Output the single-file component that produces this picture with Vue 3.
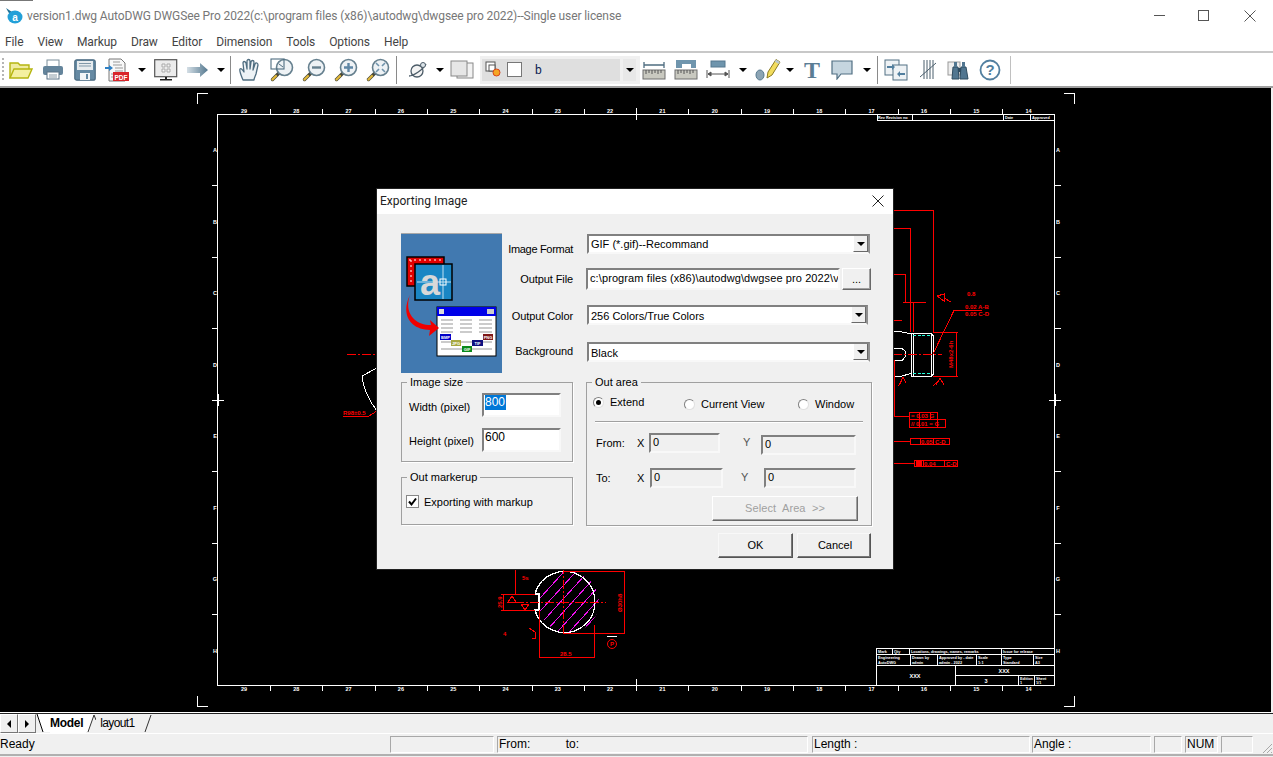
<template>
  <div class="app">
    <!-- shared toolbar symbols -->
    <svg class="defs" width="0" height="0">
      <defs>
        <symbol id="mag" viewBox="0 0 24 24">
          <path d="M9 15 L2.5 21.5" stroke="#4a4a3a" stroke-width="3.4" stroke-linecap="round" />
          <path d="M6 18 L2.5 21.5" stroke="#e3b93a" stroke-width="2.2" stroke-linecap="round" />
          <circle cx="14.5" cy="9.5" r="8" fill="#eef2f5" stroke="#66808f" stroke-width="1.6" />
        </symbol>
        <symbol id="ruler" viewBox="0 0 24 12">
          <rect x="1" y="1" width="22" height="9" fill="#c9c9c0" stroke="#6e6e6e" />
          <path d="M4 1v4M7 1v3M10 1v4M13 1v3M16 1v4M19 1v3" stroke="#555" fill="none" />
        </symbol>
      </defs>
    </svg>

    <header class="titlebar">
      <svg class="app-icon" width="18" height="18" viewBox="0 0 18 18">
        <path d="M1 1 L7 5 L5 8 Z" fill="#1f6f93" />
        <ellipse cx="10" cy="10" rx="7.5" ry="6.5" fill="#23a0d8" />
        <text x="10" y="14" text-anchor="middle" class="app-icon-a">a</text>
      </svg>
      <span class="title-text">version1.dwg AutoDWG DWGSee Pro 2022(c:\program files (x86)\autodwg\dwgsee pro 2022)--Single user license</span>
      <div class="win-btns">
        <svg class="win-min" width="12" height="12" viewBox="0 0 12 12"><path d="M0 5.5H11" stroke="#555" /></svg>
        <svg width="12" height="12" viewBox="0 0 12 12"><rect x=".5" y=".5" width="10" height="10" fill="none" stroke="#555" /></svg>
        <svg width="12" height="12" viewBox="0 0 12 12"><path d="M.5 .5L11.5 11.5M11.5 .5L.5 11.5" stroke="#555" /></svg>
      </div>
    </header>

    <nav class="menubar">
      <span v-for="m in menus" :key="m" class="menu-item">{{ m }}</span>
    </nav>

    <div class="toolbar">
      <span class="grip"></span>
      <button class="tb">
        <svg width="24" height="20" viewBox="0 0 24 20">
          <path d="M1 18V3h8l2 2h9v4" fill="#efeba0" stroke="#b5b510" stroke-width="1.4" />
          <path d="M1 18L5 9H23L19 18Z" fill="#f4f0a0" stroke="#b5b510" stroke-width="1.4" />
        </svg>
      </button>
      <button class="tb">
        <svg width="22" height="22" viewBox="0 0 22 22">
          <rect x="5" y="1" width="12" height="7" fill="#fff" stroke="#7b8d99" />
          <rect x="1" y="7" width="20" height="9" rx="2" fill="#64849b" />
          <rect x="5" y="13" width="12" height="7" fill="#fff" stroke="#5b7286" />
          <path d="M7 16h8M7 18h8" stroke="#8a9aa6" />
        </svg>
      </button>
      <button class="tb">
        <svg width="22" height="22" viewBox="0 0 22 22">
          <rect x=".8" y=".8" width="20.4" height="20.4" rx="2" fill="#668aa3" stroke="#4a6a80" stroke-width="1.2" />
          <rect x="3" y="2" width="16" height="9" fill="#e6ebee" />
          <path d="M5 4.5h12M5 7h12" stroke="#7f97a8" />
          <rect x="6" y="14" width="10" height="7" fill="#f4f6f7" />
          <rect x="12" y="15" width="2" height="5" fill="#668aa3" />
        </svg>
      </button>
      <button class="tb">
        <svg width="24" height="24" viewBox="0 0 24 24">
          <path d="M4 1h12l4 4v18H4Z" fill="#f8f8f8" stroke="#777" />
          <path d="M8 4h7M8 7h9M10 10h8M10 13h8M6 16h8M6 19h6" stroke="#999" />
          <path d="M0 9h4V7l4 3-4 3v-2H0Z" fill="#2f80c4" />
          <rect x="8" y="14" width="16" height="9" fill="#d9252a" />
          <text x="16" y="21.5" text-anchor="middle" class="pdf-text">PDF</text>
        </svg>
      </button>
      <span class="drop w17"></span>
      <button class="tb">
        <svg width="24" height="22" viewBox="0 0 24 22">
          <rect x=".7" y=".7" width="22" height="17" fill="#ececec" stroke="#555" stroke-width="1.2" />
          <path d="M8 5h3v3H8zM13 5h3v3h-3zM8 10h3v3H8zM13 10h3v3h-3z" fill="#f4f4f4" stroke="#aaa" />
          <path d="M11 18h2v2h-2zM6 20h12v1.5H6z" fill="#222" />
        </svg>
      </button>
      <button class="tb">
        <svg width="22" height="16" viewBox="0 0 22 16">
          <defs>
            <linearGradient id="arrowFill">
              <stop offset="0" stop-color="#d5dfe6" />
              <stop offset="1" stop-color="#54788f" />
            </linearGradient>
          </defs>
          <path d="M0 5H13V1L21 8L13 15V11H0Z" fill="url(#arrowFill)" />
        </svg>
      </button>
      <span class="drop w14"></span>
      <span class="sep"></span>
      <button class="tb">
        <svg width="24" height="24" viewBox="0 0 24 24">
          <path d="M5 22C3 17 1 13 2 11c1-1 2 0 4 3L5 5c0-2 2-2 3 0l1 6V3c0-2 3-2 3 0v8l1-7c0-2 3-2 3 0l-1 8 2-6c1-2 3-1 3 1l-2 9c-1 3-2 4-2 6Z" fill="#eef3f6" stroke="#4f6d80" stroke-width="1.3" stroke-linejoin="round" />
        </svg>
      </button>
      <button class="tb">
        <svg width="24" height="24" viewBox="0 0 24 24">
          <use href="#mag" />
          <rect x="1" y="1" width="13" height="10" fill="none" stroke="#4f6d80" stroke-width="1.1" />
          <path d="M9 6L13 9" stroke="#4f6d80" />
        </svg>
      </button>
      <button class="tb">
        <svg width="24" height="24" viewBox="0 0 24 24">
          <use href="#mag" />
          <path d="M10 9.5H19" stroke="#66808f" stroke-width="2.4" />
        </svg>
      </button>
      <button class="tb">
        <svg width="24" height="24" viewBox="0 0 24 24">
          <use href="#mag" />
          <path d="M10 9.5H19M14.5 5V14" stroke="#5f87a5" stroke-width="2.4" />
        </svg>
      </button>
      <button class="tb">
        <svg width="24" height="24" viewBox="0 0 24 24">
          <use href="#mag" />
          <path d="M13 8L10 5M16 8L19 5M13 11L10 14M16 11L19 14" stroke="#6f93ab" stroke-width="1.6" />
        </svg>
      </button>
      <span class="sep"></span>
      <button class="tb gap-l">
        <svg width="20" height="18" viewBox="0 0 20 18">
          <ellipse cx="9" cy="10" rx="6" ry="6" fill="#f4f4f4" stroke="#4c5c68" stroke-width="1.3" />
          <path d="M1 15C5 15 15 9 18 3" fill="none" stroke="#4c5c68" stroke-width="1.3" />
          <circle cx="15" cy="4" r="2.5" fill="#dce4e9" stroke="#4c5c68" />
        </svg>
      </button>
      <span class="drop w12"></span>
      <button class="tb">
        <svg width="24" height="20" viewBox="0 0 24 20">
          <rect x="7" y="3" width="16" height="15" fill="#f2f2f2" stroke="#888" />
          <rect x="1" y="1" width="16" height="15" fill="#e6e6e6" stroke="#888" />
        </svg>
      </button>
      <div class="layer-combo">
        <div class="layer-field">
          <svg width="17" height="17" viewBox="0 0 17 17">
            <rect x="1" y="1" width="9" height="9" fill="#fff" stroke="#555" />
            <rect x="4" y="4" width="6" height="6" fill="#fff" stroke="#555" />
            <circle cx="11.5" cy="11.5" r="3.5" fill="#f5a623" stroke="#d8431c" />
          </svg>
          <span class="layer-check"></span>
          <span class="layer-name">b</span>
        </div>
        <span class="layer-drop"><span class="drop-tri"></span></span>
      </div>
      <button class="tb">
        <svg width="24" height="22" viewBox="0 0 24 22">
          <path d="M2 6H22M2 3V9M22 3V9" stroke="#4f6d80" stroke-width="1.3" fill="none" />
          <use href="#ruler" y="10" width="24" height="12" />
        </svg>
      </button>
      <button class="tb">
        <svg width="24" height="22" viewBox="0 0 24 22">
          <path d="M2 1H22V9H17V5H8V9H2Z" fill="#6f95ad" />
          <use href="#ruler" y="10" width="24" height="12" />
        </svg>
      </button>
      <button class="tb">
        <svg width="24" height="20" viewBox="0 0 24 20">
          <rect x="5" y="1" width="14" height="6" fill="#6f95ad" stroke="#56798f" />
          <path d="M1 10V18M23 10V18M2 14H22M2 14l3-2v4zM22 14l-3-2v4z" stroke="#555" fill="#555" />
        </svg>
      </button>
      <span class="drop w18"></span>
      <button class="tb w31">
        <svg width="26" height="24" viewBox="0 0 26 24">
          <path d="M12 20L13 14L21 1.5L25 4L17 17Z" fill="#f2dc5d" stroke="#8a7a22" />
          <path d="M21 1.5L25 4L23.5 6L19.8 3.5Z" fill="#b8c6cf" />
          <ellipse cx="5" cy="17" rx="4" ry="5" fill="#8ca4b4" stroke="#56798f" />
        </svg>
      </button>
      <span class="drop w14"></span>
      <button class="tb w30">
        <span class="t-glyph">T</span>
      </button>
      <button class="tb w30">
        <svg width="22" height="20" viewBox="0 0 22 20">
          <path d="M1 1H21V14H10L6 19V14H1Z" fill="#c5d5df" stroke="#527084" stroke-width="1.2" />
        </svg>
      </button>
      <span class="drop w20"></span>
      <span class="sep flush"></span>
      <button class="tb w30">
        <svg width="24" height="22" viewBox="0 0 24 22">
          <rect x="1" y="1" width="14" height="15" fill="#eef2f5" stroke="#527084" />
          <rect x="9" y="6" width="14" height="15" fill="#eef2f5" stroke="#527084" />
          <path d="M3 7h5V5l3 3-3 3V9H3ZM21 14h-5v-2l-3 3 3 3v-2h5Z" fill="#527f9f" />
        </svg>
      </button>
      <button class="tb gap-l w30">
        <svg width="18" height="22" viewBox="0 0 18 22">
          <path d="M5 1V20M8 1V20M11 1V20M14 1V20M1 18L17 4" stroke="#4a5e6c" fill="none" />
        </svg>
      </button>
      <button class="tb w31">
        <svg width="24" height="20" viewBox="0 0 24 20">
          <rect x="1" y="2" width="12" height="13" fill="#eee" stroke="#999" />
          <path d="M6 7h5l1 12H5ZM14 7h5l2 12h-8Z" fill="#517690" stroke="#2f4c60" />
          <rect x="7" y="2" width="3" height="5" fill="#517690" />
          <rect x="15" y="2" width="3" height="5" fill="#517690" />
          <rect x="11" y="8" width="3" height="4" fill="#2f4c60" />
        </svg>
      </button>
      <button class="tb w31">
        <svg width="22" height="22" viewBox="0 0 22 22">
          <circle cx="11" cy="11" r="9.5" fill="#fff" stroke="#527f9f" stroke-width="1.8" />
          <text x="11" y="16" text-anchor="middle" class="help-glyph">?</text>
        </svg>
      </button>
      <span class="sep last"></span>
    </div>

    <main class="canvas">
      <svg class="drawing" width="1273" height="624" viewBox="0 88 1273 624">
        <!-- sheet frame -->
        <g fill="none" stroke="#fff">
          <path d="M197.5 104V93.5H208M1064 93.5H1074.5V104M197.5 696V706.5H208M1064 706.5H1074.5V696" />
          <rect x="217.5" y="114.5" width="837" height="571" />
          <path v-for="x in tickX" :key="x" :d="`M${x} 114V109M${x} 685V691`" />
          <path v-for="y in tickY" :key="y" :d="`M218 ${y}H212M1055 ${y}H1061`" />
          <path d="M636 108V120M630 114H642M636 679V691M630 685H642M212 400H224M218 394V406M1049 400H1061M1055 394V406" />
          <!-- title block -->
          <path d="M876 648H1054M876 654H1054M876 665H1054M955 675H1054M876 648V685M892 648V654M909 648V654M1001 648V665M910 654V665M937 654V665M976 654V665M1033 654V665M955 665V685M1018 675V685M1034 675V685" />
          <path d="M877 114V120H1055M912 114V120M1003 114V120M1030 114V120" />
        </g>
        <g class="tiny" fill="#fff">
          <text v-for="n in labelX" :key="n.x" :x="n.x" y="113" text-anchor="middle">{{ n.t }}</text>
          <text v-for="n in labelX" :key="'b' + n.x" :x="n.x" y="691" text-anchor="middle">{{ n.t }}</text>
          <text v-for="n in labelY" :key="n.y" x="215" :y="n.y" text-anchor="middle">{{ n.t }}</text>
          <text v-for="n in labelY" :key="'r' + n.y" x="1058" :y="n.y" text-anchor="middle">{{ n.t }}</text>
        </g>
        <g class="micro" fill="#fff">
          <text x="878" y="119">Rev Revision no</text>
          <text x="1005" y="119">Date</text>
          <text x="1032" y="119">Approved</text>
          <text x="878" y="653">Mark</text>
          <text x="894" y="653">Qty</text>
          <text x="911" y="653">Locations, drawings, names, remarks</text>
          <text x="1003" y="653">Issue for release</text>
          <text x="878" y="659">Engineering</text>
          <text x="878" y="664">AutoDWG</text>
          <text x="912" y="659">Drawn by</text>
          <text x="912" y="664">admin</text>
          <text x="939" y="659">Approved by - date</text>
          <text x="939" y="664">admin - 2022</text>
          <text x="978" y="659">Scale</text>
          <text x="978" y="664">1:1</text>
          <text x="1003" y="659">Type</text>
          <text x="1003" y="664">Standard</text>
          <text x="1035" y="659">Size</text>
          <text x="1035" y="664">A3</text>
          <text x="1020" y="680">Edition</text>
          <text x="1020" y="684">1</text>
          <text x="1036" y="680">Sheet</text>
          <text x="1036" y="684">1/1</text>
        </g>
        <g class="tiny" fill="#fff">
          <text x="915" y="678" text-anchor="middle">XXX</text>
          <text x="1004" y="673" text-anchor="middle">XXX</text>
          <text x="986" y="683" text-anchor="middle">3</text>
        </g>

        <!-- part, right of the dialog -->
        <g fill="none" stroke="#fff">
          <path d="M893 331.5H900L911 334M893 376.5H900L911 373.5" />
          <path d="M893 348.5H902L905 351V357L902 360.5H893" />
          <path d="M911.5 333.5H931L933.5 336V374L931 376.5H911.5ZM913.5 333.5V376.5M931.5 333.5V376.5" />
        </g>
        <path d="M913 335.5H931M913 373.5H931" stroke="#2fd" stroke-dasharray="3 1.5" fill="none" />
        <g fill="none" stroke="#f00">
          <path d="M893 210.5H933.5V332M893 228.5H910.5V332M893 274.5H905.5V302M903 302.5H926M913.5 302V332M893 320.5H902" />
          <path d="M933 332.5H958M933 376.5H958M956.5 332V376" />
          <path d="M893 354.5H942" stroke-dasharray="9 2 2 2" />
          <path d="M933 354L954 310.5H982" />
          <path d="M894.5 360V416H910M893 441.5H910M893 463.5H914" />
          <path d="M909.5 412.5H937.5V419.5H909.5ZM909.5 419.5H945V427.5H909.5ZM919.5 412V427M930.5 412V419M937.5 419V427" />
          <path d="M910.5 438.5H949.5V444.5H910.5ZM920.5 438V444M933.5 438V444" />
          <path d="M914.5 460.5H957.5V466.5H914.5ZM923.5 460V466M944.5 460V466" />
          <path d="M937 296L944 294V301ZM944 298L951 302M900 383L903 377L906 383M898 386L902 381M936 385L940 378L944 385M933 386L937 382" />
        </g>
        <g class="micro-red" fill="#f00">
          <text x="967" y="296">0.8</text>
          <text x="965" y="309">0.02 A-B</text>
          <text x="965" y="316">0.05 C-D</text>
          <text transform="translate(953 368) rotate(-90)">M48x2-6h</text>
          <text x="911" y="418">= 0.03 G</text>
          <text x="911" y="426">// 0.01 = G</text>
          <text x="921" y="444">0.05</text>
          <text x="935" y="444">C-D</text>
          <text x="924" y="466">0.04</text>
          <text x="946" y="466">C-D</text>
        </g>
        <rect x="916" y="461" width="6" height="5" fill="#f00" />

        <!-- section, below the dialog -->
        <defs>
          <clipPath id="shaftClip">
            <path d="M539 594A30.5 30.5 0 1 1 539 610Z" />
          </clipPath>
        </defs>
        <g clip-path="url(#shaftClip)" stroke="#f010f0" fill="none">
          <path v-for="h in hatch" :key="h" :d="`M${h} 640L${h + 68} 565`" />
        </g>
        <path d="M539 594H535A30.5 30.5 0 1 1 535 610H539Z" fill="none" stroke="#fff" stroke-width="1.2" />
        <g fill="none" stroke="#f00">
          <path d="M563 571.5H624.5V633.5H563M539.5 610V657.5H594.5V625M501 594.5H535M501 610.5H535M503.5 594V610M515.5 570V594" />
          <path d="M515 602.5H606M563.5 565V636" stroke-dasharray="9 2 2 2" />
          <path d="M508 602L512 596L516 602ZM521 604H529L525 610Z" />
          <path d="M529 628L535 632V638L532 638" />
          <circle class="round" cx="612" cy="644" r="4.5" />
        </g>
        <path d="M607 636.5H617" stroke="#fff" />
        <g class="micro-red" fill="#f00">
          <text x="522" y="580">5s</text>
          <text x="503" y="636">4</text>
          <text x="610" y="646">P</text>
          <text x="560" y="656">28.5</text>
          <text transform="translate(622 612) rotate(-90)">&#216;30h8</text>
          <text transform="translate(502 608) rotate(-90)">25.9</text>
        </g>

        <!-- left of the dialog -->
        <path d="M347 354.5H377" stroke="#f00" stroke-dasharray="9 2 2 2" />
        <path d="M377 368L362 376C363 388 370 402 377 411" stroke="#fff" fill="none" />
        <path d="M343 416.5H368L377 411" stroke="#f00" fill="none" />
        <text x="343" y="415" class="micro-red" fill="#f00">R98&#177;0.5</text>
      </svg>
    </main>

    <section class="dlg">
      <div class="dlg-title">
        <span>Exporting Image</span>
        <svg width="12" height="12" viewBox="0 0 12 12"><path d="M.5 .5L11.5 11.5M11.5 .5L.5 11.5" stroke="#222" /></svg>
      </div>
      <div class="dlg-body">
        <div class="dlg-top">
          <svg class="export-art" width="101" height="140" viewBox="0 0 101 140">
            <rect width="101" height="140" fill="#4179b0" />
            <rect x="0" y="0" width="101" height="1" fill="#a8a8a8" />
            <rect x="6" y="24" width="37" height="29" fill="#e00000" stroke="#000" stroke-width="1.5" />
            <path d="M8 27H40M10 27V52" stroke="#fff" stroke-dasharray="2 3" fill="none" />
            <rect x="14" y="31" width="37" height="36" fill="#1a86c4" stroke="#000" stroke-width="1.5" />
            <path d="M16 49H50M42 32V66" stroke="#bfe0f2" fill="none" />
            <text x="29" y="62" text-anchor="middle" class="art-a">a</text>
            <rect x="39" y="46" width="6" height="6" fill="none" stroke="#fff" />
            <rect x="36" y="74" width="59" height="49" fill="#fff" stroke="#000" stroke-width="1" />
            <rect x="36" y="74" width="59" height="9" fill="#0000e8" />
            <rect x="38" y="76" width="5" height="5" fill="#ddd" />
            <rect x="86" y="76" width="7" height="5" fill="#ccc" />
            <path d="M40 87H52M59 87H71M78 87H91M40 91H52M59 91H71M78 91H91M40 95H52M59 95H71M78 95H91M40 99H52M59 99H71M78 99H91M40 109H91M40 116H91" stroke="#bbb" stroke-width="1.5" fill="none" />
            <path d="M9 62C3 78 12 92 30 92L29 87L38 95L28 103L29 97C10 97 -1 82 9 62Z" fill="#f00000" />
            <g class="art-tag">
              <rect x="39" y="101" width="11" height="6" fill="#0000c8" />
              <text x="44.5" y="106" text-anchor="middle">BMP</text>
              <rect x="50" y="107" width="10" height="6" fill="#a8a840" />
              <text x="55" y="112" text-anchor="middle">JPG</text>
              <rect x="61" y="113" width="10" height="6" fill="#0a8a1a" />
              <text x="66" y="118" text-anchor="middle">GIF</text>
              <rect x="71" y="107" width="11" height="6" fill="#101080" />
              <text x="76.5" y="112" text-anchor="middle">TIF</text>
              <rect x="82" y="101" width="10" height="6" fill="#801818" />
              <text x="87" y="106" text-anchor="middle">PNG</text>
            </g>
          </svg>
          <div class="format-col">
            <div class="row r1">
              <label>Image Format</label>
              <div class="combo c283"><span>GIF (*.gif)--Recommand</span><i class="combo-btn"><span class="drop-tri"></span></i></div>
            </div>
            <div class="row r2">
              <label>Output File</label>
              <div class="inset path-field">c:\program files (x86)\autodwg\dwgsee pro 2022\v</div>
              <button class="btn browse">...</button>
            </div>
            <div class="row r3">
              <label>Output Color</label>
              <div class="combo c281"><span>256 Colors/True Colors</span><i class="combo-btn"><span class="drop-tri"></span></i></div>
            </div>
            <div class="row r4">
              <label>Background</label>
              <div class="combo c283"><span>Black</span><i class="combo-btn"><span class="drop-tri"></span></i></div>
            </div>
          </div>
        </div>

        <div class="dlg-lower">
          <div class="left-col">
            <fieldset class="group size-group">
              <legend>Image size</legend>
              <div class="size-row">
                <label>Width (pixel)</label>
                <div class="inset size-input"><span class="selected">800</span></div>
              </div>
              <div class="size-row second">
                <label>Height (pixel)</label>
                <div class="inset size-input">600</div>
              </div>
            </fieldset>
            <fieldset class="group markup-group">
              <legend>Out markerup</legend>
              <div class="check-row">
                <svg class="check" width="13" height="13" viewBox="0 0 13 13">
                  <rect x=".5" y=".5" width="12" height="12" fill="#fff" stroke="#888" />
                  <path d="M3 6.5L5.5 9.5L10 3.5" fill="none" stroke="#000" stroke-width="2" />
                </svg>
                <span>Exporting with markup</span>
              </div>
            </fieldset>
          </div>

          <fieldset class="group area-group">
            <legend>Out area</legend>
            <div class="radio-row">
              <div class="radio-item w91 up"><span class="radio on"></span>Extend</div>
              <div class="radio-item w114"><span class="radio"></span>Current View</div>
              <div class="radio-item"><span class="radio"></span>Window</div>
            </div>
            <div class="area-sep"></div>
            <div class="coord-row from">
              <span class="c-name">From:</span>
              <span class="c-x">X</span>
              <div class="inset field w71">0</div>
              <span class="c-y up2">Y</span>
              <div class="inset field w95 down2">0</div>
            </div>
            <div class="coord-row to">
              <span class="c-name">To:</span>
              <span class="c-x wide">X</span>
              <div class="inset field w73">0</div>
              <span class="c-y near up2">Y</span>
              <div class="inset field w92">0</div>
            </div>
            <button class="btn select-area">Select&nbsp; Area &nbsp;&gt;&gt;</button>
          </fieldset>
        </div>

        <div class="dlg-actions">
          <button class="btn action">OK</button>
          <button class="btn action cancel">Cancel</button>
        </div>
      </div>
    </section>

    <div class="tabbar">
      <button class="tab-nav"><span class="nav-l"></span></button>
      <button class="tab-nav"><span class="nav-r"></span></button>
      <svg class="slant" width="14" height="18" viewBox="0 0 14 18">
        <path d="M0 0L7 18H14V0Z" fill="#fff" />
        <path d="M1 0L7 18" stroke="#000" />
      </svg>
      <span class="tab active">Model</span>
      <svg class="slant" width="10" height="18" viewBox="0 0 10 18">
        <path d="M0 0H8L3 18H0Z" fill="#fff" />
        <path d="M8 1L2 18M8 1L10 6" stroke="#333" fill="none" />
      </svg>
      <span class="tab">layout1</span>
      <svg class="slant" width="10" height="18" viewBox="0 0 10 18">
        <path d="M8 1L2 18" stroke="#333" />
      </svg>
    </div>

    <footer class="statusbar">
      <span class="ready">Ready</span>
      <span class="cell s1"></span>
      <span class="cell s2">From: <i class="to-label">to:</i></span>
      <span class="cell s3">Length :</span>
      <span class="cell s4">Angle :</span>
      <span class="cell s5"></span>
      <span class="cell s6">NUM</span>
      <span class="cell s7"></span>
      <svg class="resize-grip" width="12" height="12" viewBox="0 0 12 12">
        <path d="M11 2L2 11M11 6L6 11M11 10L10 11" stroke="#a8a8a8" />
      </svg>
    </footer>
  </div>
</template>

<script setup>
const menus = ['File', 'View', 'Markup', 'Draw', 'Editor', 'Dimension', 'Tools', 'Options', 'Help']

const tickX = Array.from({ length: 15 }, (_, i) => 270.5 + Math.round(i * 52.3))
const tickY = Array.from({ length: 7 }, (_, i) => 185.5 + Math.round(i * 71.5))
const labelX = Array.from({ length: 16 }, (_, i) => ({ x: 244 + i * 52.3, t: 29 - i }))
const labelY = 'ABCDEFGH'.split('').map((t, i) => ({ t, y: 152 + i * 71.5 }))
const hatch = Array.from({ length: 12 }, (_, i) => 478 + i * 12)
</script>

<style>
html, body {
  margin: 0;
  background: #f0f0f0;
}
</style>

<style scoped>
.app {
  position: relative;
  display: flex;
  flex-direction: column;
  width: 1273px;
  height: 757px;
  overflow: hidden;
  background: #f0f0f0;
  font-family: "Liberation Sans", Arial, sans-serif;
  font-size: 11px;
  color: #000;
}

.defs {
  position: absolute;
}

button {
  font-family: inherit;
  font-size: inherit;
}

/* title + menu */
.titlebar {
  display: flex;
  align-items: center;
  height: 31px;
  padding-left: 5px;
  background: linear-gradient(90deg, #777 0, #777 33px, #fff 33px, #fff 100%) top / 100% 1px no-repeat #fff;
  box-sizing: border-box;
}

.app-icon {
  flex: none;
  margin-right: 4px;
}

.app-icon-a {
  font: bold 10px "Liberation Sans", sans-serif;
  fill: #fff;
}

.title-text {
  padding-top: 1px;
  font-family: Roboto, sans-serif;
  font-size: 12px;
  letter-spacing: -.1px;
  color: #777;
  white-space: nowrap;
}

.win-btns {
  display: flex;
  gap: 34px;
  margin-left: auto;
  padding-right: 17px;
}

.win-min {
  margin-right: -2px;
}

.menubar {
  display: flex;
  align-items: center;
  height: 20px;
  padding: 1px 0 0 5px;
  box-sizing: border-box;
  gap: 14px;
  background: #fff;
  font-family: Roboto, sans-serif;
  font-size: 12px;
  letter-spacing: -.1px;
  color: #444;
}

.toolbar {
  display: flex;
  align-items: center;
  height: 37px;
  box-sizing: border-box;
  padding-left: 2px;
  background: #fff;
  border-top: 2px solid #c8c8c8;
  border-bottom: 2px solid #a0a0a0;
}

.grip {
  width: 2px;
  height: 24px;
  margin-right: 1px;
  background: repeating-linear-gradient(#b5b5b5 0 2px, transparent 2px 4px);
}

.tb {
  display: flex;
  align-items: center;
  justify-content: center;
  flex: none;
  width: 32px;
  height: 32px;
  padding: 0;
  border: 0;
  background: none;
}

.tb.w30 { width: 30px; }
.tb.w31 { width: 31px; }
.tb.gap-l { margin-left: 2px; }

.drop {
  position: relative;
  flex: none;
  height: 10px;
}

.drop::after {
  content: "";
  position: absolute;
  left: 50%;
  top: 3px;
  margin-left: -4px;
  border: 4px solid transparent;
  border-top: 4px solid #000;
  border-bottom: 0;
}

.w12 { width: 12px; }
.w14 { width: 14px; }
.w17 { width: 17px; }
.w18 { width: 18px; }
.w20 { width: 20px; }

.sep {
  flex: none;
  width: 1px;
  height: 28px;
  margin: 0 3px 0 2px;
  background: #8a8a8a;
}

.sep.flush {
  margin-left: 0;
}

.sep.last {
  margin-left: 5px;
  background: #c0c0c0;
}

.pdf-text {
  font: bold 6.5px "Liberation Sans", sans-serif;
  fill: #fff;
}

.t-glyph {
  font: bold 24px/24px "Liberation Serif", serif;
  color: #5b7d95;
}

.help-glyph {
  font: bold 15px "Liberation Sans", sans-serif;
  fill: #527f9f;
}

.layer-combo {
  display: flex;
  flex: none;
  gap: 3px;
  box-sizing: border-box;
  width: 160px;
  height: 28px;
  margin: 0 -2px 0 2px;
  padding: 3px 4px 3px 2px;
  background: #f0f0f0;
}

.layer-field {
  display: flex;
  align-items: center;
  width: 138px;
  padding-left: 3px;
  box-sizing: border-box;
  background: #dfdfdf;
}

.layer-check {
  width: 13px;
  height: 13px;
  margin-left: 5px;
  background: #fff;
  border: 1px solid #777;
}

.layer-name {
  margin-left: 13px;
  font-family: Roboto, sans-serif;
  font-size: 12px;
  color: #0a1a50;
}

.layer-drop {
  display: flex;
  align-items: center;
  justify-content: center;
  width: 13px;
  background: #e8e8e8;
}

.drop-tri {
  display: block;
  border: 4px solid transparent;
  border-top: 4px solid #000;
  border-bottom: 0;
}

/* drawing area */
.canvas {
  flex: none;
  height: 624px;
  background: #000;
  border-right: 2px solid #f0f0f0;
  border-bottom: 1px solid #fff;
  overflow: hidden;
}

.drawing {
  display: block;
  shape-rendering: crispEdges;
}

.round {
  shape-rendering: auto;
}

.tiny text {
  font: bold 5.5px "Liberation Sans", sans-serif;
}

.micro text {
  font: bold 3.8px "Liberation Sans", sans-serif;
}

.micro-red,
.micro-red text {
  font: bold 6px "Liberation Sans", sans-serif;
}

/* dialog */
.dlg {
  position: absolute;
  left: 376px;
  top: 188px;
  box-sizing: border-box;
  width: 518px;
  height: 382px;
  border: 1px solid #222;
  background: #f0f0f0;
}

.dlg-title {
  display: flex;
  align-items: center;
  justify-content: space-between;
  box-sizing: border-box;
  height: 25px;
  padding: 0 9px 1px 3px;
  background: #fff;
  font-family: Roboto, sans-serif;
  font-size: 12px;
  color: #222;
}

.dlg-top {
  display: flex;
  margin: 19px 0 0 24px;
}

.export-art {
  flex: none;
}

.art-a {
  font: bold 36px "Liberation Sans", sans-serif;
  fill: #d8d8d8;
}

.art-tag text {
  font: bold 4px "Liberation Sans", sans-serif;
  fill: #fff;
}

.format-col {
  display: flex;
  flex-direction: column;
  margin-left: 5px;
}

.row {
  display: flex;
  align-items: center;
}

.row label {
  width: 66px;
  margin-right: 14px;
  text-align: right;
  white-space: nowrap;
  letter-spacing: -.1px;
}

.r1 { margin-top: 1px; height: 20px; }
.r1 label { padding-top: 10px; letter-spacing: -.3px; }
.r2 { margin-top: 14px; height: 22px; }
.r2 label { margin-right: 13px; }
.r3 { margin-top: 15px; height: 20px; }
.r3 label { padding-top: 2px; }
.r3 .combo > span,
.r4 .combo > span { padding-top: 2px; }
.r4 { margin-top: 17px; height: 20px; }
.r4 label { padding-bottom: 2px; }

.inset {
  box-sizing: border-box;
  background: #fff;
  border: 2px solid;
  border-color: #808080 #f8f8f8 #f8f8f8 #808080;
}

.combo {
  display: flex;
  align-items: center;
  justify-content: space-between;
  box-sizing: border-box;
  height: 20px;
  padding-left: 2px;
  background: #fff;
  border: 2px solid;
  border-color: #808080 #909090 #f8f8f8 #808080;
}

.c283 { width: 283px; }
.c281 { width: 281px; }

.combo-btn {
  display: flex;
  align-items: center;
  justify-content: center;
  width: 15px;
  height: 16px;
  background: #f0f0f0;
  border-right: 1px solid #696969;
  border-bottom: 1px solid #696969;
  border-left: 1px solid #fff;
  box-sizing: border-box;
}

.path-field {
  width: 254px;
  height: 22px;
  padding: 2px 0 0 2px;
  white-space: nowrap;
  overflow: hidden;
  letter-spacing: .1px;
}

.btn {
  box-sizing: border-box;
  padding: 0;
  background: #f0f0f0;
  border: 1px solid;
  border-color: #fff #696969 #696969 #fff;
  box-shadow: inset -1px -1px 0 #a0a0a0;
  color: #000;
}

.browse {
  width: 29px;
  height: 22px;
  margin-left: 2px;
}

.dlg-lower {
  display: flex;
  margin: 2px 0 0 24px;
}

.left-col {
  width: 172px;
}

.group {
  box-sizing: border-box;
  margin: 0;
  padding: 0;
  min-width: 0;
  border: 1px solid #a0a0a0;
  box-shadow: 1px 1px 0 #fff;
}

.group legend {
  height: 14px;
  margin-left: 5px;
  padding: 0 3px;
  line-height: 14px;
}

.size-group {
  height: 87px;
  padding-top: 4px;
}

.size-row {
  display: flex;
  align-items: center;
  margin-left: 7px;
}

.size-row label {
  width: 73px;
  padding-top: 4px;
}

.size-row.second {
  margin-top: 11px;
}

.size-row.second label {
  padding-top: 2px;
}

.size-input {
  width: 79px;
  height: 24px;
  padding: 0 1px;
  line-height: 15px;
  font-size: 12px;
}

.selected {
  display: inline-block;
  background: #0078d7;
  color: #fff;
  padding-right: 1px;
}

.markup-group {
  height: 55px;
  margin-top: 8px;
}

.check-row {
  display: flex;
  align-items: center;
  gap: 5px;
  margin: 11px 0 0 4px;
}

.area-group {
  width: 286px;
  height: 151px;
  margin-left: 13px;
}

.radio-row {
  display: flex;
  align-items: center;
  height: 20px;
  margin-top: 5px;
  padding-left: 6px;
}

.radio-item {
  display: flex;
  align-items: center;
  gap: 6px;
  flex: none;
}

.w91 { width: 91px; }
.w114 { width: 114px; }
.up { margin-top: -4px; }

.radio {
  position: relative;
  box-sizing: border-box;
  width: 11px;
  height: 11px;
  border-radius: 50%;
  background: #fff;
  border: 1px solid #808080;
  border-right-color: #e0e0e0;
  border-bottom-color: #e0e0e0;
}

.radio.on::after {
  content: "";
  position: absolute;
  left: 2px;
  top: 2px;
  width: 5px;
  height: 5px;
  border-radius: 50%;
  background: #000;
}

.area-sep {
  width: 268px;
  height: 1px;
  margin: 7px 0 0 8px;
  background: #a0a0a0;
  box-shadow: 0 1px 0 #fff;
}

.coord-row {
  display: flex;
  align-items: center;
  height: 20px;
  padding-left: 9px;
}

.coord-row.from {
  margin-top: 11px;
}

.coord-row.to {
  margin-top: 15px;
}

.c-name { width: 41px; }
.c-x { width: 12px; }
.c-x.wide { width: 13px; }
.c-y { width: 18px; margin-left: 23px; color: #555; }
.c-y.near { width: 23px; margin-left: 18px; }
.up2 { margin-top: -3px; }
.down2 { margin-top: 3px; }

.field {
  height: 20px;
  padding-left: 2px;
  background: #f0f0f0;
  line-height: 15px;
}

.w71 { width: 71px; }
.w73 { width: 73px; }
.w92 { width: 92px; }
.w95 { width: 95px; }

.select-area {
  display: block;
  width: 146px;
  height: 25px;
  margin: 8px 0 0 125px;
  padding-bottom: 2px;
  color: #a0a0a0;
  letter-spacing: .1px;
}

.dlg-actions {
  display: flex;
  justify-content: flex-end;
  gap: 4px;
  margin-top: 7px;
  padding-right: 22px;
}

.action {
  width: 75px;
  height: 25px;
  padding-bottom: 2px;
  font-size: 11px;
  border-color: #f8f8f8 #555 #555 #f8f8f8;
  box-shadow: inset -1px -1px 0 #777;
}

.action.cancel {
  width: 74px;
  padding-left: 2px;
}

/* tabs + status */
.tabbar {
  display: flex;
  align-items: stretch;
  height: 19px;
  border-top: 1px solid #222;
  border-bottom: 1px solid #fff;
  box-sizing: content-box;
  font-size: 12px;
}

.tab-nav {
  display: flex;
  align-items: center;
  justify-content: center;
  width: 18px;
  padding: 0;
  background: #f0f0f0;
  border: 1px solid;
  border-color: #fff #777 #777 #fff;
}

.nav-l,
.nav-r {
  border: 4px solid transparent;
}

.nav-l {
  border-right: 4px solid #000;
  border-left: 0;
}

.nav-r {
  border-left: 4px solid #000;
  border-right: 0;
}

.slant {
  flex: none;
}

.tab {
  padding-top: 2px;
  line-height: 14px;
}

.tab:not(.active) {
  padding: 2px 8px 0 4px;
  letter-spacing: -.6px;
}

.tab.active {
  background: #fff;
  font-weight: bold;
  padding: 2px 3px 0 0;
  letter-spacing: -.3px;
}

.statusbar {
  position: relative;
  display: flex;
  align-items: center;
  height: 19px;
  margin-top: 1px;
  border-bottom: 2px solid #b0b0b0;
  font-size: 12px;
}

.ready {
  width: 390px;
  flex: none;
  padding-bottom: 2px;
  box-sizing: border-box;
}

.cell {
  box-sizing: border-box;
  flex: none;
  height: 17px;
  padding-left: 1px;
  line-height: 15px;
  white-space: nowrap;
  border: 1px solid;
  border-color: #a8a8a8 #fff #fff #a8a8a8;
}

.s1 { width: 104px; margin-right: 3px; }
.s2 { width: 311px; margin-right: 4px; }
.s3 { width: 218px; margin-right: 2px; }
.s4 { width: 119px; margin-right: 3px; }
.s5 { width: 28px; margin-right: 3px; }
.s6 { width: 33px; margin-right: 3px; }
.s7 { width: 32px; }

.to-label {
  font-style: normal;
  margin-left: 32px;
}

.resize-grip {
  position: absolute;
  right: 0;
  bottom: 0;
}
</style>
